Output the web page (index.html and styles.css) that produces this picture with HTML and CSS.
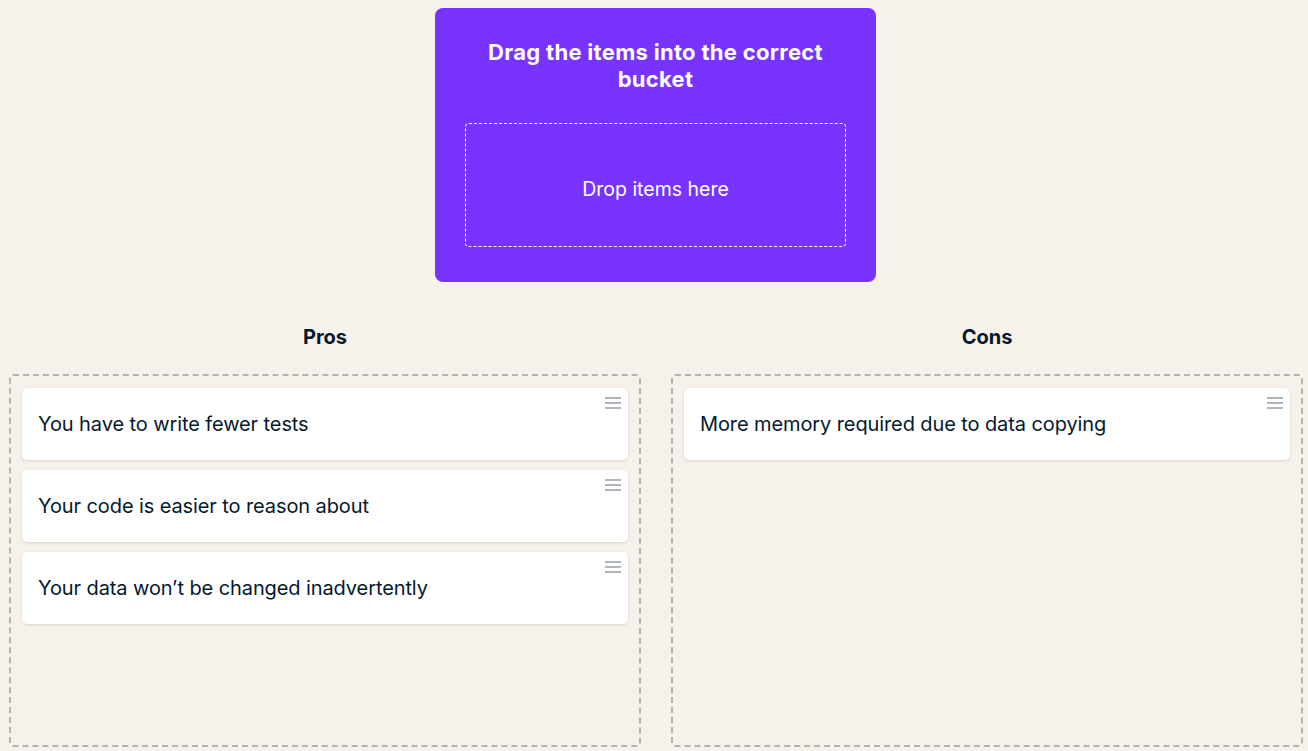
FILE: index.html
```html
<!DOCTYPE html>
<html lang="en">
<head>
<meta charset="utf-8">
<title>Drag and drop</title>
<link rel="stylesheet" href="styles.css">
</head>
<body>
<div class="page">
  <section class="prompt">
    <h1 class="prompt-title">Drag the items into the correct bucket</h1>
    <div class="dropzone">Drop items here</div>
  </section>
  <div class="buckets">
    <div class="bucket-col">
      <h2 class="bucket-title">Pros</h2>
      <div class="bucket">
        <div class="item"><span class="item-text">You have to write fewer tests</span><span class="handle"><i></i><i></i><i></i></span></div>
        <div class="item"><span class="item-text">Your code is easier to reason about</span><span class="handle"><i></i><i></i><i></i></span></div>
        <div class="item"><span class="item-text">Your data won’t be changed inadvertently</span><span class="handle"><i></i><i></i><i></i></span></div>
      </div>
    </div>
    <div class="bucket-col">
      <h2 class="bucket-title">Cons</h2>
      <div class="bucket">
        <div class="item"><span class="item-text">More memory required due to data copying</span><span class="handle"><i></i><i></i><i></i></span></div>
      </div>
    </div>
  </div>
</div>
</body>
</html>
```

FILE: styles.css
```css
* { box-sizing: border-box; }
html, body { margin: 0; padding: 0; }
body {
  background: #f6f1ea;
  font-family: "Inter", "Liberation Sans", sans-serif;
  color: #05192d;
  width: 1308px;
  height: 751px;
  overflow: hidden;
}
.page {
  padding: 8px 5px 0 9px;
  display: flex;
  flex-direction: column;
  align-items: center;
}
.prompt {
  width: 441px;
  height: 274px;
  background: #7933ff;
  border-radius: 8px;
  padding: 31px 30px 35px;
  display: flex;
  flex-direction: column;
  align-items: center;
  margin-right: 1px;
}
.prompt-title {
  margin: 0;
  color: #fff;
  font-size: 22px;
  font-weight: 700;
  line-height: 27px;
  text-align: center;
  width: 380px;
  letter-spacing: 0.3px;
}
.dropzone {
  margin-top: 30px;
  width: 381px;
  height: 124px;
  border: 1px dashed #fff;
  border-radius: 4px;
  display: flex;
  align-items: center;
  justify-content: center;
  padding-top: 7px;
  color: #fff;
  font-size: 19.5px;
  font-weight: 400;
}
.buckets {
  width: 100%;
  display: flex;
  gap: 30px;
  margin-top: 41px;
}
.bucket-col {
  flex: 1;
  display: flex;
  flex-direction: column;
}
.bucket-title {
  margin: 0 0 23px;
  text-align: center;
  font-size: 20px;
  font-weight: 700;
  line-height: 28px;
  color: #05192d;
}
.bucket {
  height: 373px;
  border: 2px dashed #b3b3b3;
  border-radius: 4px;
  padding: 12px 11px;
  display: flex;
  flex-direction: column;
  gap: 10px;
}
.item {
  position: relative;
  height: 72px;
  flex: none;
  background: #fff;
  border-radius: 5px;
  box-shadow: 0 1px 3px rgba(0, 0, 0, 0.12);
  display: flex;
  align-items: center;
  padding: 0 16px;
  font-size: 20px;
  color: #05192d;
}
.item-text { letter-spacing: -0.1px; }
.handle {
  position: absolute;
  top: 9px;
  right: 7px;
  width: 16px;
  display: flex;
  flex-direction: column;
  gap: 3px;
}
.handle i {
  display: block;
  height: 2px;
  background: #b1b5bc;
}
```
